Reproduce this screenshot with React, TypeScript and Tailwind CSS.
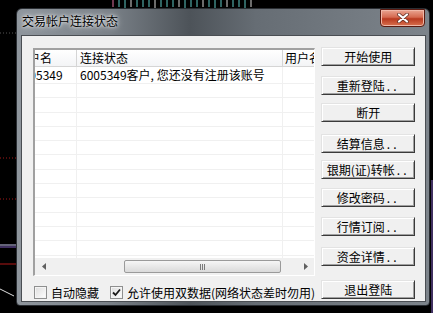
import React from "react"

function Backdrop() {
  const ticks = Array.from({ length: 24 }, (_, i) => 113 + i * 6)
  return (
    <svg className="absolute inset-0" width="433" height="313">
      {ticks.map((x, i) => (
        <line key={x} x1={x} y1={0} x2={x} y2={i % 5 === 2 ? 9 : 7} stroke={i === 0 ? "#e070a0" : i % 4 === 3 ? "#d8d8d8" : "#5fc8c4"} strokeWidth="1" />
      ))}
      <line x1="0" y1="33" x2="16" y2="33" stroke="#555" strokeDasharray="1 2" />
      <line x1="0" y1="158" x2="16" y2="158" stroke="#a01818" strokeDasharray="1 2" />
      <line x1="0" y1="199" x2="16" y2="199" stroke="#a01818" strokeDasharray="1 2" />
      <line x1="0" y1="245" x2="16" y2="245" stroke="#c8c8f0" />
      <line x1="0" y1="247" x2="16" y2="247" stroke="#8060c0" />
      <line x1="0" y1="264" x2="16" y2="264" stroke="#b01818" />
      <line x1="0" y1="289" x2="14" y2="296" stroke="#e0e0e0" />
      <line x1="432" y1="180" x2="432" y2="313" stroke="#403060" strokeWidth="2" />
    </svg>
  )
}

function Btn({ label, dots, className }: { label: string; dots?: boolean; className: string }) {
  return (
    <button className={`flex h-[19px] w-[94px] items-center justify-center border border-t-[#e3e3e3] border-l-[#e3e3e3] border-r-[#3a3a3a] border-b-[#3a3a3a] bg-[#f0f0f0] leading-none text-black shadow-[inset_1px_1px_0_#ffffff,inset_-1px_-1px_0_#a0a0a0] ${className}`}>
      {label}
      {dots && <span className="ml-[2px] tracking-[3px]">..</span>}
    </button>
  )
}

function Check({ checked }: { checked?: boolean }) {
  return (
    <div className="flex h-[13px] w-[13px] items-center justify-center border border-[#8e8f8f] bg-gradient-to-br from-[#dcdcdc] to-[#ffffff] shadow-[inset_0_0_0_1px_#f4f4f4]">
      {checked && (
        <svg width="9" height="9" viewBox="0 0 9 9">
          <path d="M1 4.5 L3.5 7 L8 1.5" fill="none" stroke="#1a1a1a" strokeWidth="1.8" />
        </svg>
      )}
    </div>
  )
}

function Row({ first, c1, c2 }: { first?: boolean; c1?: string; c2?: string }) {
  return (
    <div className={`-ml-[25px] flex border-b border-[#f0f0f0] ${first ? "h-[17px]" : "h-[14.3px]"}`}>
      <div className="w-[67px] shrink-0 border-r border-[#f0f0f0] pl-[6px] leading-[16px]">{c1}</div>
      <div className="w-[206px] shrink-0 border-r border-[#f0f0f0] pl-[3px] leading-[16px]">{c2}</div>
      <div className="w-[200px] shrink-0" />
    </div>
  )
}

export default function App() {
  return (
    <div className="relative h-[313px] w-[433px] overflow-hidden bg-black font-['Noto_Sans_CJK_SC',sans-serif] text-[12px] text-black">
      <Backdrop />
      <div className="relative ml-[16px] mt-[8px] h-[298px] w-[414px] rounded-t-[6px] rounded-b-[4px] border border-[#2a2e33] bg-[linear-gradient(90deg,#8f969d_0%,#7b8289_22%,#4d5359_42%,#666d74_58%,#7d848b_100%)]">
        <div className="flex h-[26px] justify-between pl-[5px] pr-[4px]">
          <div className="pt-[5px] text-[12px] leading-[14px] text-black [text-shadow:0_0_6px_#ffffff,0_0_3px_#ffffff]">交易帐户连接状态</div>
          <div className="flex h-[18px] w-[45px] items-center justify-center rounded-b-[4px] border border-[#5a1a10] bg-[linear-gradient(180deg,#eaa592_0%,#d56a50_45%,#b8391f_55%,#d8714f_100%)] shadow-[inset_0_0_0_1px_#f0b8a8]">
            <svg width="12" height="10" viewBox="0 0 12 10">
              <path d="M2 1.5 L10 8.5 M10 1.5 L2 8.5" stroke="#5a2a20" strokeWidth="3.6" strokeLinecap="round" />
              <path d="M2 1.5 L10 8.5 M10 1.5 L2 8.5" stroke="#ffffff" strokeWidth="2.2" strokeLinecap="round" />
            </svg>
          </div>
        </div>
        <div className="ml-[4px] flex h-[267px] w-[405px] border border-[#4a4e53] bg-[#f0f0f0] pl-[11px]">
          <div className="flex flex-col pt-[12px]">
            <div className="flex h-[228px] w-[282px] flex-col overflow-hidden border-t-2 border-l-2 border-r border-b border-t-[#a0a0a0] border-l-[#a0a0a0] border-r-[#ffffff] border-b-[#ffffff] bg-white">
              <div className="-ml-[25px] flex h-[17px] shrink-0 border-b border-[#d5d5d5] bg-gradient-to-b from-[#ffffff] to-[#f3f4f6]">
                <div className="w-[67px] shrink-0 border-r border-[#d5d5d5] pl-[6px] leading-[16px]">用户名</div>
                <div className="w-[206px] shrink-0 border-r border-[#d5d5d5] pl-[3px] leading-[16px]">连接状态</div>
                <div className="w-[200px] shrink-0 pl-[2px] leading-[16px]">用户名称</div>
              </div>
              <div className="flex-1 overflow-hidden">
                <Row first c1="6005349" c2="6005349客户, 您还没有注册该账号" />
                {Array.from({ length: 13 }, (_, i) => (
                  <Row key={i} />
                ))}
              </div>
              <div className="flex h-[17px] shrink-0 items-center bg-[#f0f0f0]">
                <div className="flex w-[17px] justify-center">
                  <svg width="4" height="7" viewBox="0 0 4 7"><path d="M4 0 L0 3.5 L4 7 Z" fill="#606060" /></svg>
                </div>
                <div className="flex h-full flex-1 items-center">
                  <div className="ml-[72px] flex h-[13px] w-[157px] items-center justify-center rounded-[2px] border border-[#9a9a9a] bg-gradient-to-b from-[#f6f6f6] to-[#dadada]">
                    <div className="flex gap-[1px]">
                      <div className="h-[6px] w-[1px] bg-[#7a7a7a]" />
                      <div className="h-[6px] w-[1px] bg-[#7a7a7a]" />
                      <div className="h-[6px] w-[1px] bg-[#7a7a7a]" />
                    </div>
                  </div>
                </div>
                <div className="flex w-[17px] justify-center">
                  <svg width="4" height="7" viewBox="0 0 4 7"><path d="M0 0 L4 3.5 L0 7 Z" fill="#606060" /></svg>
                </div>
              </div>
            </div>
            <div className="mt-[10px] flex items-center leading-none">
              <div className="ml-[1px]"><Check /></div>
              <span className="ml-[4px]">自动隐藏</span>
              <div className="ml-[11px]"><Check checked /></div>
              <span className="ml-[4px]">允许使用双数据(网络状态差时勿用)</span>
            </div>
          </div>
          <div className="ml-[6px] flex flex-col pt-[11px]">
            <Btn label="开始使用" className="" />
            <Btn label="重新登陆" dots className="mt-[10px]" />
            <Btn label="断开" className="mt-[8px]" />
            <Btn label="结算信息" dots className="mt-[12px]" />
            <Btn label="银期(证)转帐" dots className="mt-[7px]" />
            <Btn label="修改密码" dots className="mt-[9px]" />
            <Btn label="行情订阅" dots className="mt-[10px]" />
            <Btn label="资金详情" dots className="mt-[11px]" />
            <Btn label="退出登陆" className="mt-[14px]" />
          </div>
        </div>
      </div>
    </div>
  )
}
